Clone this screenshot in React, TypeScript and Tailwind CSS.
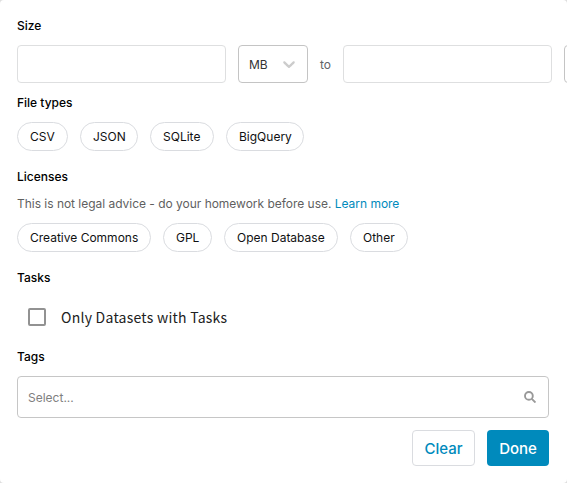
import type { ReactNode } from "react";

const sans = "font-['Inter',sans-serif]";

function Heading({ children }: { children: ReactNode }) {
  return <h2 className="h-5 text-[12px] leading-5 font-medium text-black">{children}</h2>;
}

function Chips({ items }: { items: { label: string; width: string }[] }) {
  return (
    <div className="flex gap-3">
      {items.map(({ label, width }) => (
        <button
          key={label}
          className={`${width} h-[29px] shrink-0 rounded-full border border-[#dadce0] pl-3 text-left text-[12px] leading-5 whitespace-nowrap text-[#101112]`}
        >
          {label}
        </button>
      ))}
    </div>
  );
}

function UnitSelect({ unit }: { unit?: string }) {
  return (
    <div className="flex h-[38px] w-[70px] shrink-0 items-center justify-between rounded border border-[#c4c4c4] pr-2 pl-2.5 text-[12px] text-[#333333]">
      <span className="pt-0.5">{unit}</span>
      <svg width="20" height="20" viewBox="0 0 20 20" fill="#cccccc">
        <path d="M4.516 7.548c0.436-0.446 1.043-0.481 1.576 0l3.908 3.747 3.908-3.747c0.533-0.481 1.141-0.446 1.574 0 0.436 0.445 0.408 1.197 0 1.615-0.406 0.418-4.695 4.502-4.695 4.502-0.217 0.223-0.502 0.335-0.787 0.335s-0.57-0.112-0.789-0.335c0 0-4.287-4.084-4.695-4.502s-0.436-1.17 0-1.615z" />
      </svg>
    </div>
  );
}

export default function App() {
  return (
    <div className="h-[483px] w-[567px] overflow-hidden bg-[#dedede]">
      <main className={`${sans} flex h-full flex-col overflow-hidden rounded bg-white pt-4 pl-[17px]`}>
        <Heading>Size</Heading>
        <div className="mt-[9px] flex items-center gap-3">
          <input className="h-[38px] w-[209px] shrink-0 rounded border border-[#dedfe0] px-2 text-[12px]" />
          <UnitSelect unit="MB" />
          <span className="w-[11px] shrink-0 pt-0.5 text-[12px] text-[#5f6368]">to</span>
          <input className="h-[38px] w-[209px] shrink-0 rounded border border-[#dedfe0] px-2 text-[12px]" />
          <UnitSelect />
        </div>

        <div className="mt-[10px]">
          <Heading>File types</Heading>
        </div>
        <div className="mt-[9px]">
          <Chips
            items={[
              { label: "CSV", width: "w-[51px]" },
              { label: "JSON", width: "w-[58px]" },
              { label: "SQLite", width: "w-[64px]" },
              { label: "BigQuery", width: "w-[78px]" },
            ]}
          />
        </div>

        <div className="mt-4">
          <Heading>Licenses</Heading>
        </div>
        <p className="mt-[7px] h-5 text-[12px] leading-5 tracking-[-0.002em] text-[#5f5f5f]">
          This is not legal advice - do your homework before use. <a className="text-[#008abc]">Learn more</a>
        </p>
        <div className="mt-[9px]">
          <Chips
            items={[
              { label: "Creative Commons", width: "w-[134px]" },
              { label: "GPL", width: "w-[49px]" },
              { label: "Open Database", width: "w-[114px]" },
              { label: "Other", width: "w-[58px]" },
            ]}
          />
        </div>

        <div className="mt-4">
          <Heading>Tasks</Heading>
        </div>
        <label className="mt-5 ml-[11px] flex h-[18px] items-center gap-[15px]">
          <span className="size-[18px] rounded-[2px] border-2 border-[#929292]" />
          <span className="font-['Noto_Sans_CJK_SC',sans-serif] text-[14px] leading-[18px] tracking-[0.25px] text-[#212121]">
            Only Datasets with Tasks
          </span>
        </label>

        <div className="mt-[21px]">
          <Heading>Tags</Heading>
        </div>
        <div className="mt-[9px] flex h-[42px] w-[532px] items-center justify-between rounded border border-[#c6c6c6] pr-3 pl-2.5">
          <span className="pt-0.5 text-[12px] text-[#808080]">Select...</span>
          <svg width="12" height="12" viewBox="0 0 12 12" fill="none" stroke="#999999" strokeWidth="1.9">
            <circle cx="4.9" cy="4.9" r="3.9" />
            <path d="M7.8 7.8 11.5 11.5" />
          </svg>
        </div>
        <div className="mt-3 flex w-[532px] justify-end gap-3 text-[15px] font-medium">
          <button className="h-9 w-[63px] rounded border border-[#dadce0] pt-0.5 text-[#008abc]">Clear</button>
          <button className="h-9 w-[62px] rounded bg-[#008abc] pt-0.5 text-white">Done</button>
        </div>
      </main>
    </div>
  );
}
